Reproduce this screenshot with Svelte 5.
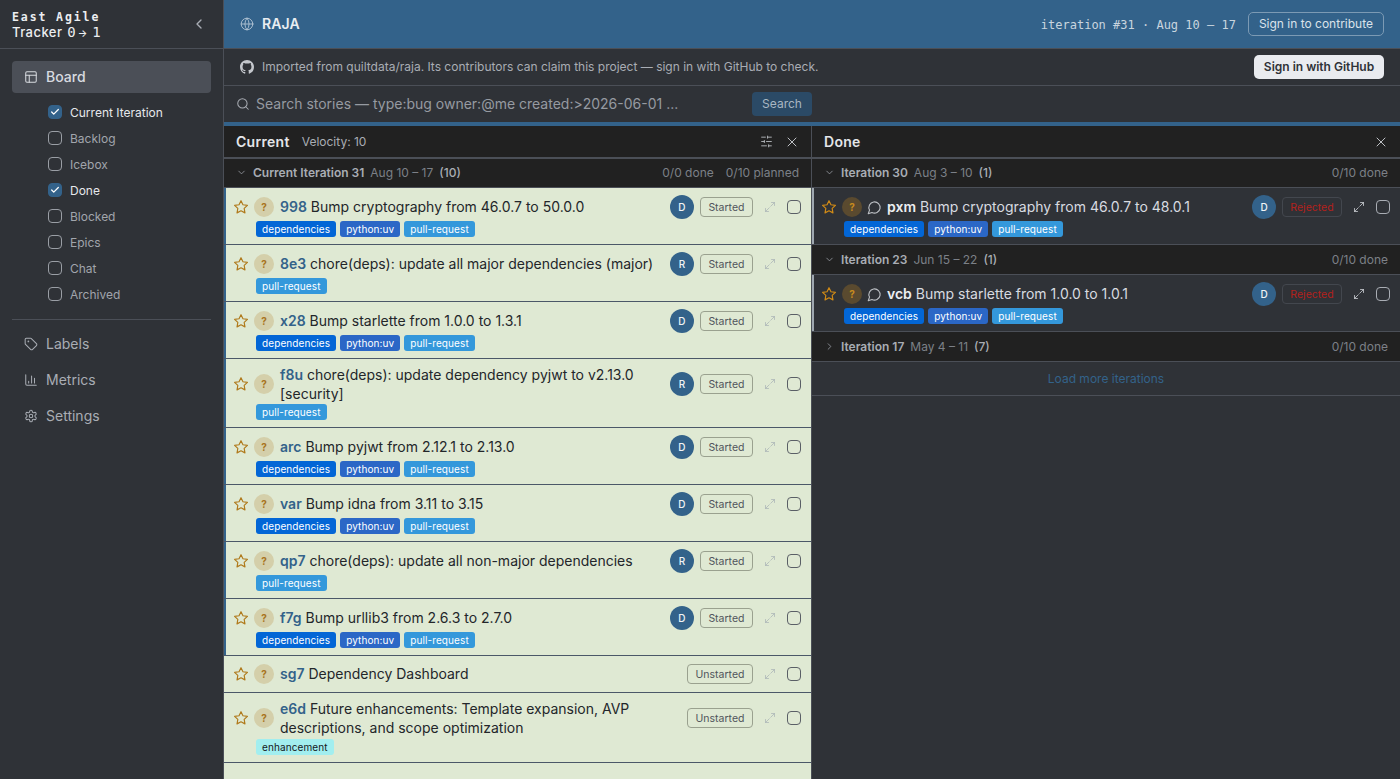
<script>
  const filters = [
    { label: 'Current Iteration', on: true },
    { label: 'Backlog' },
    { label: 'Icebox' },
    { label: 'Done', on: true },
    { label: 'Blocked' },
    { label: 'Epics' },
    { label: 'Chat' },
    { label: 'Archived' }
  ]
  const bump = ['dependencies', 'python:uv', 'pull-request']
  const pr = ['pull-request']
  const current = [
    { id: '998', title: 'Bump cryptography from 46.0.7 to 50.0.0', who: 'D', state: 'Started', labels: bump, bar: true },
    { id: '8e3', title: 'chore(deps): update all major dependencies (major)', who: 'R', state: 'Started', labels: pr, bar: true },
    { id: 'x28', title: 'Bump starlette from 1.0.0 to 1.3.1', who: 'D', state: 'Started', labels: bump, bar: true },
    { id: 'f8u', title: 'chore(deps): update dependency pyjwt to v2.13.0 [security]', who: 'R', state: 'Started', labels: pr, bar: true },
    { id: 'arc', title: 'Bump pyjwt from 2.12.1 to 2.13.0', who: 'D', state: 'Started', labels: bump, bar: true },
    { id: 'var', title: 'Bump idna from 3.11 to 3.15', who: 'D', state: 'Started', labels: bump, bar: true },
    { id: 'qp7', title: 'chore(deps): update all non-major dependencies', who: 'R', state: 'Started', labels: pr, bar: true },
    { id: 'f7g', title: 'Bump urllib3 from 2.6.3 to 2.7.0', who: 'D', state: 'Started', labels: bump, bar: true },
    { id: 'sg7', title: 'Dependency Dashboard', state: 'Unstarted', labels: [] },
    { id: 'e6d', title: 'Future enhancements: Template expansion, AVP descriptions, and scope optimization', state: 'Unstarted', labels: ['enhancement'] }
  ]
  const slug = (s) => s.replace(':', '-')
</script>

{#snippet chevronDown()}
  <svg class="chev" viewBox="0 0 24 24"><path d="M6 9l6 6 6-6" /></svg>
{/snippet}

{#snippet close()}
  <svg class="tool x" viewBox="0 0 24 24"><path d="M18 6L6 18M6 6l12 12" /></svg>
{/snippet}

{#snippet star()}
  <svg class="star" viewBox="0 0 24 24"><path d="M12 2.5l2.95 6.1 6.7.9-4.9 4.65 1.2 6.65L12 17.6l-5.95 3.2 1.2-6.65-4.9-4.65 6.7-.9z" /></svg>
{/snippet}

{#snippet expand()}
  <svg class="expand" viewBox="0 0 24 24"><path d="M15 3h6v6M21 3l-7.5 7.5M9 21H3v-6M3 21l7.5-7.5" /></svg>
{/snippet}

{#snippet bubble()}
  <svg class="bubble" viewBox="0 0 24 24"><path d="M7.9 20A9 9 0 1 0 4 16.1L2 22z" /></svg>
{/snippet}

{#snippet tags(labels)}
  {#if labels.length}
    <div class="tags">
      {#each labels as l}<span class="tag {slug(l)}">{l}</span>{/each}
    </div>
  {/if}
{/snippet}

{#snippet doneCard(id, title)}
  <article class="card dark bar">
    <div class="row tagged">
      {@render star()}
      <span class="est">?</span>
      {@render bubble()}
      <div class="title"><b>{id}</b> {title}</div>
      <span class="avatar">D</span>
      <span class="state rejected">Rejected</span>
      {@render expand()}
      <span class="check"></span>
    </div>
    {@render tags(bump)}
  </article>
{/snippet}

<div class="app">
  <aside class="sidebar">
    <div class="brand">
      <div class="brand-text">
        <div class="brand-top">East Agile</div>
        <div class="brand-sub">Tracker <span class="mono">0<span class="arrow">→</span>1</span></div>
      </div>
      <svg class="collapse" viewBox="0 0 24 24"><path d="M15 18l-6-6 6-6" /></svg>
    </div>
    <nav class="nav">
      <div class="nav-item active">
        <svg class="nav-icon" viewBox="0 0 24 24"><rect x="3" y="3" width="18" height="18" rx="2" /><path d="M3 9h18M9 21V9" /></svg>
        Board
      </div>
      <div class="filters">
        {#each filters as f}
          <div class="filter" class:on={f.on}>
            <span class="box">
              {#if f.on}<svg viewBox="0 0 24 24"><path d="M20 6L9 17l-5-5" /></svg>{/if}
            </span>
            {f.label}
          </div>
        {/each}
      </div>
      <div class="rule"></div>
      <div class="nav-item">
        <svg class="nav-icon" viewBox="0 0 24 24"><path d="M12.6 2.6A2 2 0 0 0 11.2 2H4a2 2 0 0 0-2 2v7.2a2 2 0 0 0 .6 1.4l8.7 8.7a2.4 2.4 0 0 0 3.4 0l6.6-6.6a2.4 2.4 0 0 0 0-3.4z" /><circle cx="7.5" cy="7.5" r=".6" /></svg>
        Labels
      </div>
      <div class="nav-item">
        <svg class="nav-icon" viewBox="0 0 24 24"><path d="M3 3v16a2 2 0 0 0 2 2h16M8 17v-3M13 17V5M18 17V9" /></svg>
        Metrics
      </div>
      <div class="nav-item">
        <svg class="nav-icon" viewBox="0 0 24 24"><path d="M12.2 2h-.4a2 2 0 0 0-2 2v.2a2 2 0 0 1-1 1.7l-.4.3a2 2 0 0 1-2 0l-.2-.1a2 2 0 0 0-2.7.7l-.2.4a2 2 0 0 0 .7 2.7l.2.1a2 2 0 0 1 1 1.7v.6a2 2 0 0 1-1 1.7l-.2.1a2 2 0 0 0-.7 2.7l.2.4a2 2 0 0 0 2.7.7l.2-.1a2 2 0 0 1 2 0l.4.3a2 2 0 0 1 1 1.7v.2a2 2 0 0 0 2 2h.4a2 2 0 0 0 2-2v-.2a2 2 0 0 1 1-1.7l.4-.3a2 2 0 0 1 2 0l.2.1a2 2 0 0 0 2.7-.7l.2-.4a2 2 0 0 0-.7-2.7l-.2-.1a2 2 0 0 1-1-1.7v-.6a2 2 0 0 1 1-1.7l.2-.1a2 2 0 0 0 .7-2.7l-.2-.4a2 2 0 0 0-2.7-.7l-.2.1a2 2 0 0 1-2 0l-.4-.3a2 2 0 0 1-1-1.7V4a2 2 0 0 0-2-2z" /><circle cx="12" cy="12" r="3" /></svg>
        Settings
      </div>
    </nav>
  </aside>

  <main class="main">
    <header class="topbar">
      <svg class="globe" viewBox="0 0 24 24"><circle cx="12" cy="12" r="10" /><path d="M2 12h20M12 2a15 15 0 0 1 0 20M12 2a15 15 0 0 0 0 20" /></svg>
      <span class="project">RAJA</span>
      <span class="iter">iteration #31 · Aug 10 – 17</span>
      <button class="btn-outline">Sign in to contribute</button>
    </header>

    <div class="banner">
      <svg class="gh" viewBox="0 0 16 16"><path d="M8 0C3.58 0 0 3.58 0 8c0 3.54 2.29 6.53 5.47 7.59.4.07.55-.17.55-.38 0-.19-.01-.82-.01-1.49-2.01.37-2.53-.49-2.69-.94-.09-.23-.48-.94-.82-1.13-.28-.15-.68-.52-.01-.53.63-.01 1.08.58 1.23.82.72 1.21 1.87.87 2.33.66.07-.52.28-.87.51-1.07-1.78-.2-3.64-.89-3.64-3.95 0-.87.31-1.59.82-2.15-.08-.2-.36-1.02.08-2.12 0 0 .67-.21 2.2.82.64-.18 1.32-.27 2-.27s1.36.09 2 .27c1.53-1.04 2.2-.82 2.2-.82.44 1.1.16 1.92.08 2.12.51.56.82 1.27.82 2.15 0 3.07-1.87 3.75-3.65 3.95.29.25.54.73.54 1.48 0 1.07-.01 1.93-.01 2.2 0 .21.15.46.55.38A8 8 0 0 0 16 8c0-4.42-3.58-8-8-8z" /></svg>
      <span class="banner-text">Imported from quiltdata/raja. Its contributors can claim this project — sign in with GitHub to check.</span>
      <button class="btn-light">Sign in with GitHub</button>
    </div>

    <div class="search">
      <svg class="search-icon" viewBox="0 0 24 24"><circle cx="11" cy="11" r="8" /><path d="M21 21l-4.3-4.3" /></svg>
      <span class="search-text">Search stories — type:bug owner:@me created:&gt;2026-06-01 ...</span>
      <button class="btn-search">Search</button>
    </div>

    <div class="panels">
      <section class="panel left">
        <div class="panel-head">
          <span class="panel-title">Current</span>
          <span class="velocity">Velocity: 10</span>
          <span class="grow"></span>
          <svg class="tool sliders" viewBox="0 0 24 24"><path d="M21 4h-7M10 4H3M21 12h-9M8 12H3M21 20h-5M12 20H3M14 2v4M8 10v4M16 18v4" /></svg>
          {@render close()}
        </div>
        <div class="group">
          {@render chevronDown()}
          <span class="g-name">Current Iteration 31</span>
          <span class="g-date">Aug 10 – 17</span>
          <span class="g-count">(10)</span>
          <span class="grow"></span>
          <span class="g-stat">0/0 done</span>
          <span class="g-stat">0/10 planned</span>
        </div>
        {#each current as s}
          <article class="card" class:bar={s.bar}>
            <div class="row" class:tagged={s.labels.length > 0}>
              {@render star()}
              <span class="est">?</span>
              <div class="title"><b>{s.id}</b> {s.title}</div>
              {#if s.who}<span class="avatar">{s.who}</span>{/if}
              <span class="state">{s.state}</span>
              {@render expand()}
              <span class="check"></span>
            </div>
            {@render tags(s.labels)}
          </article>
        {/each}
      </section>

      <section class="panel right">
        <div class="panel-head">
          <span class="panel-title">Done</span>
          <span class="grow"></span>
          {@render close()}
        </div>
        <div class="group">
          {@render chevronDown()}
          <span class="g-name">Iteration 30</span>
          <span class="g-date">Aug 3 – 10</span>
          <span class="g-count">(1)</span>
          <span class="grow"></span>
          <span class="g-stat">0/10 done</span>
        </div>
        {@render doneCard('pxm', 'Bump cryptography from 46.0.7 to 48.0.1')}
        <div class="group">
          {@render chevronDown()}
          <span class="g-name">Iteration 23</span>
          <span class="g-date">Jun 15 – 22</span>
          <span class="g-count">(1)</span>
          <span class="grow"></span>
          <span class="g-stat">0/10 done</span>
        </div>
        {@render doneCard('vcb', 'Bump starlette from 1.0.0 to 1.0.1')}
        <div class="group">
          <svg class="chev" viewBox="0 0 24 24"><path d="M9 18l6-6-6-6" /></svg>
          <span class="g-name">Iteration 17</span>
          <span class="g-date">May 4 – 11</span>
          <span class="g-count">(7)</span>
          <span class="grow"></span>
          <span class="g-stat">0/10 done</span>
        </div>
        <div class="more">Load more iterations</div>
      </section>
    </div>
  </main>
</div>

<style>
  :global(body) { margin: 0; background: #2f3237; font-family: Inter, "Liberation Sans", sans-serif; }
  svg { fill: none; stroke: currentColor; stroke-width: 2; stroke-linecap: round; stroke-linejoin: round; flex: none; display: block; }

  .app { display: flex; height: 779px; overflow: hidden; }
  .grow { flex: 1; }

  .sidebar { width: 223px; flex: none; background: #2f3237; border-right: 1px solid #4b4f57; }
  .brand { height: 48px; border-bottom: 1px solid #4b4f57; display: flex; align-items: center; padding: 0 12px; }
  .brand-text { flex: 1; color: #eceef1; padding-top: 2px; }
  .brand-top { font-family: "DejaVu Sans Mono", monospace; font-weight: 700; font-size: 11.5px; letter-spacing: 1.9px; line-height: 16px; }
  .brand-sub { font-size: 13px; font-weight: 500; line-height: 15px; letter-spacing: .45px; }
  .brand-sub .mono { font-family: "DejaVu Sans Mono", monospace; font-size: 14px; letter-spacing: 0; margin-left: 1px; }
  .arrow { font-family: Inter, sans-serif; font-size: 10px; margin: 0 5px 0 2px; }
  .collapse { width: 16px; height: 16px; color: #a9adb4; margin-right: 4px; }

  .nav { padding: 12px; }
  .nav-item { height: 32px; box-sizing: border-box; padding: 0 12px 1px; display: flex; align-items: center; gap: 8px; border-radius: 4px; font-size: 14px; color: #a9adb4; margin-bottom: 4px; }
  .nav-item.active { background: #4b4f57; color: #d8dbe0; font-weight: 500; margin-bottom: 0; }
  .nav-icon { width: 14px; height: 14px; stroke-width: 1.75; }

  .filters { padding: 6px 0 0 36px; }
  .filter { height: 26px; display: flex; align-items: center; gap: 8px; font-size: 12px; color: #a1a5ac; }
  .filter.on { color: #e6e8eb; }
  .box { width: 14px; height: 14px; box-sizing: border-box; border: 1px solid #9a9ea5; border-radius: 4px; display: flex; align-items: center; justify-content: center; }
  .on .box { background: #33628a; border-color: #33628a; color: #fff; }
  .box svg { width: 10px; height: 10px; stroke-width: 3; }

  .rule { height: 1px; background: #4b4f57; margin: 12px 0 8px; }

  .main { flex: 1; min-width: 0; display: flex; flex-direction: column; }
  .topbar { height: 48px; box-sizing: content-box; background: #33628a; display: flex; align-items: center; padding: 0 16px; flex: none; border-bottom: 1px solid #4b4f57; color: #e9edf1; }
  .globe { width: 14px; height: 14px; stroke-width: 1.5; color: #b5c6d6; margin-right: 8px; }
  .project { font-size: 14px; font-weight: 600; letter-spacing: .1px; flex: 1; padding-bottom: 1px; }
  .iter { font-family: "DejaVu Sans Mono", monospace; font-size: 12px; color: #c9d5df; margin-right: 12px; padding-top: 1px; }
  button { font-family: inherit; cursor: pointer; }
  .btn-outline { height: 24px; padding: 0 10px 1px; background: transparent; border: 1px solid #7c9ab4; border-radius: 5px; color: #dbe3ea; font-size: 12px; }

  .banner { height: 36px; display: flex; align-items: center; padding: 0 16px; background: #2f3237; border-bottom: 1px solid #4b4f57; flex: none; }
  .gh { width: 14px; height: 14px; fill: #c4c7cc; stroke: none; margin-right: 8px; }
  .banner-text { flex: 1; font-size: 12px; color: #a9adb4; padding-bottom: 1px; }
  .btn-light { height: 24px; min-width: 130px; padding: 0 0 1px; background: #e9ebef; border: 0; border-radius: 5px; color: #2f3237; font-size: 12px; font-weight: 600; }

  .search { height: 36px; display: flex; align-items: center; padding: 0 12px; background: #2f3237; flex: none; }
  .search-icon { width: 14px; height: 14px; color: #a9adb4; stroke-width: 1.75; margin-right: 6px; }
  .search-text { width: 496px; font-size: 14px; color: #969aa1; padding-bottom: 1px; }
  .btn-search { height: 24px; width: 60px; padding: 0 0 1px; background: #2b4a66; border: 0; border-radius: 4px; color: #a9b6c2; font-size: 12px; }

  .panels { flex: 1; min-height: 0; display: flex; border-top: 4px solid #33628a; }
  .panel { overflow: hidden; }
  .left { width: 587px; flex: none; background: #dfe9d3; border-right: 1px solid #4b4f57; }
  .right { flex: 1; background: #2f3237; }

  .panel-head { height: 31px; display: flex; align-items: center; background: #212121; padding: 0 12px; gap: 12px; border-bottom: 2px solid #4b4f57; }
  .panel-title { font-size: 14px; font-weight: 600; color: #e4e6e9; letter-spacing: .3px; }
  .velocity { font-size: 12px; color: #a9adb4; }
  .tool { width: 13px; height: 13px; color: #bdc0c5; stroke-width: 1.6; }
  .tool.x { width: 16px; height: 16px; stroke-width: 1.5; margin-right: -1px; }
  .sliders { margin-right: -1px; }

  .group { height: 27px; padding: 0 12px 1px; display: flex; align-items: center; background: #212121; border-bottom: 1px solid #4b4f57; font-size: 12px; }
  .card.dark + .group { height: 28px; }
  .chev { width: 11px; height: 11px; color: #9a9ea5; margin-right: 6px; stroke-width: 1.75; }
  .g-name { font-weight: 600; color: #a9adb4; margin-right: 6px; }
  .g-date { color: #7c8087; margin-right: 6px; }
  .g-count { font-weight: 500; color: #a9adb4; }
  .g-stat { color: #7c8087; margin-left: 12px; }

  .card { padding: 7px 10px 7px 9px; border-bottom: 1px solid #4b5868; color: #23262a; position: relative; }
  .card.bar::before { content: ''; position: absolute; left: 0; top: 0; bottom: 0; width: 2px; background: #33628a; }
  .card.dark { color: #d8dbe0; border-bottom-color: #4b4f57; }
  .card.dark.bar::before { background: #9ea7b0; }
  .row { display: flex; align-items: center; min-height: 22px; }
  .row.tagged { padding-bottom: 2px; }

  .star { width: 16px; height: 16px; color: #b07a1c; stroke-width: 1.75; margin-right: 5px; }
  .dark .star { color: #d08a16; }
  .est { width: 20px; height: 20px; flex: none; border-radius: 50%; background: #d4cfaa; color: #a8741d; font-size: 10px; font-weight: 700; display: flex; align-items: center; justify-content: center; margin-right: 6px; }
  .dark .est { background: #5a4a2f; color: #c78a1e; margin-right: 5px; }
  .bubble { width: 15px; height: 15px; color: #bdc0c5; stroke-width: 1.75; margin-right: 5px; }
  .title { flex: 1; min-width: 0; font-size: 14px; line-height: 18.9px; margin: -.3px 0 -1.2px; padding-right: 10px; }
  .title b { font-weight: 600; color: #33628a; }
  .dark .title b { color: #eceef1; }
  .tags { display: flex; gap: 4px; padding-left: 23px; }
  .tag { height: 16px; line-height: 16px; padding: 0 6px; border-radius: 3px; font-size: 10px; letter-spacing: .1px; color: #fff; }
  .dependencies { background: #0366d6; }
  .python-uv { background: #2b67c6; }
  .pull-request { background: #3498db; }
  .enhancement { background: #a2eeef; color: #15181c; }

  .avatar { width: 24px; height: 24px; flex: none; border-radius: 50%; background: #33628a; color: #f1f3f5; font-size: 10px; font-weight: 500; display: flex; align-items: center; justify-content: center; margin-right: 6px; }
  .state { height: 20px; line-height: 20px; box-sizing: border-box; padding: 0 7.5px; border: 1px solid #9aa18f; border-radius: 4px; font-size: 10.5px; color: #50555c; margin-right: 11px; }
  .rejected { color: #b3211c; border-color: #43474e; width: 60px; text-align: center; padding: 0; }
  .expand { width: 12px; height: 12px; color: #a9b3b5; stroke-width: 1.5; margin-right: 11px; }
  .dark .expand { color: #d8dbe0; }
  .check { width: 14px; height: 14px; flex: none; box-sizing: border-box; border: 1px solid #5a5f66; border-radius: 4px; }
  .dark .check { border-color: #a9adb4; }

  .more { height: 33px; line-height: 33px; text-align: center; font-size: 12px; color: #33628a; border-bottom: 1px solid #4b4f57; }
</style>
